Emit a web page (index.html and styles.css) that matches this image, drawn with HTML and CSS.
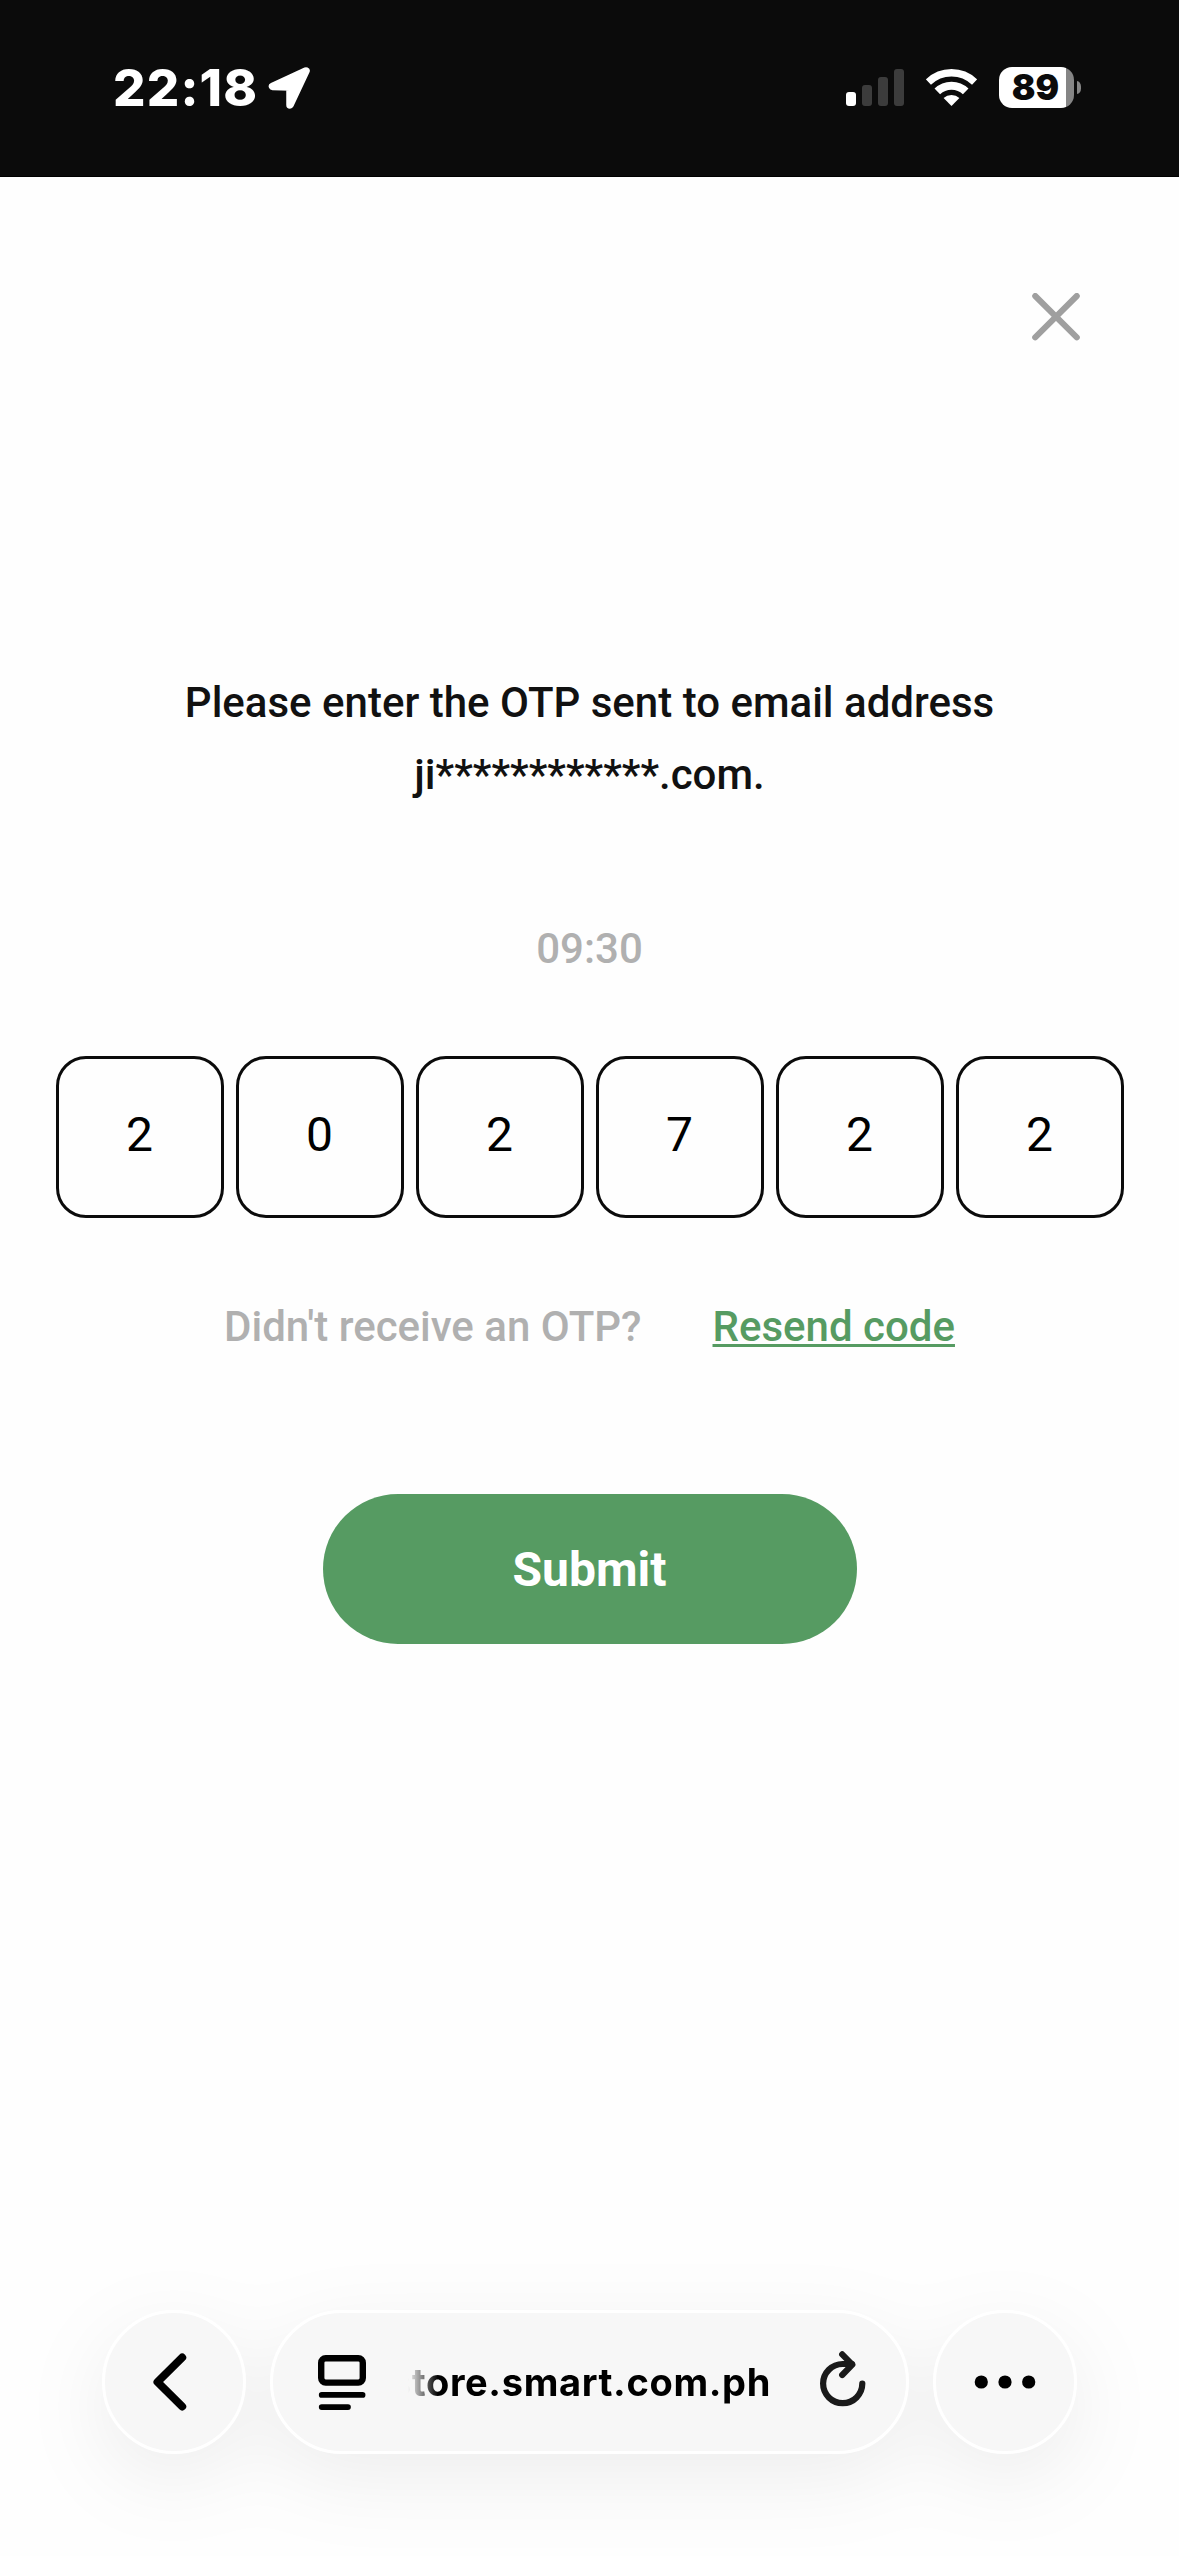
FILE: index.html
```html
<!DOCTYPE html>
<html lang="en">
<head>
    <meta charset="UTF-8">
    <meta name="viewport" content="width=device-width, initial-scale=1.0">
    <title>Enter OTP</title>
    <link rel="stylesheet" href="styles.css">
</head>
<body>
    <div class="status-bar">
        <div class="status-left">
            <span class="time">22:18</span>
            <svg class="location" width="43" height="43" viewBox="0 0 43 43">
                <path d="M38 4 L4.5 19.5 L22 20 L22 38 Z" fill="#fff" stroke="#fff" stroke-width="7.5" stroke-linejoin="round"/>
            </svg>
        </div>
        <div class="status-right">
            <svg width="58" height="37" viewBox="0 0 58 37">
                <rect x="0" y="23" width="10" height="14" rx="3" fill="#fff"/>
                <rect x="16" y="16" width="10" height="21" rx="3" fill="#3c3c3c"/>
                <rect x="32" y="8" width="10" height="29" rx="3" fill="#3c3c3c"/>
                <rect x="48" y="0" width="10" height="37" rx="3" fill="#3c3c3c"/>
            </svg>
            <svg class="wifi" width="51" height="37" viewBox="0 0 51 37">
                <path d="M2.4 13.1 A33.3 33.3 0 0 1 48.6 13.1" fill="none" stroke="#fff" stroke-width="7.4"/>
                <path d="M11.3 22.4 A20.4 20.4 0 0 1 39.7 22.4" fill="none" stroke="#fff" stroke-width="8"/>
                <path d="M25.5 37 L17.6 29 A11.6 11.6 0 0 1 33.4 29 Z" fill="#fff"/>
            </svg>
            <div class="battery"><span>89</span></div>
            <div class="battery-tip"></div>
        </div>
    </div>

    <div class="page">
        <div class="close-row">
            <svg class="close" width="48" height="48" viewBox="0 0 48 48">
                <path d="M3.2 3 L44.8 44.4 M44.8 3 L3.2 44.4" stroke="#9f9f9f" stroke-width="6" stroke-linecap="round"/>
            </svg>
        </div>

        <p class="message">Please enter the OTP sent to email address<br>ji************.com.</p>
        <p class="timer">09:30</p>

        <div class="otp">
            <div class="digit">2</div>
            <div class="digit">0</div>
            <div class="digit">2</div>
            <div class="digit">7</div>
            <div class="digit">2</div>
            <div class="digit">2</div>
        </div>

        <div class="resend">
            <span>Didn't receive an OTP?</span>
            <a href="#">Resend code</a>
        </div>

        <button class="submit">Submit</button>
    </div>

    <div class="toolbar">
        <div class="round back">
            <svg width="34" height="60" viewBox="0 0 34 60">
                <path d="M29.2 5.5 L4.5 30 L29.2 54.5" fill="none" stroke="#000" stroke-width="8" stroke-linecap="round" stroke-linejoin="round"/>
            </svg>
        </div>
        <div class="address">
            <svg width="48" height="55" viewBox="0 0 48 55">
                <rect x="3.2" y="3.2" width="41.6" height="24.4" rx="4.5" fill="none" stroke="#000" stroke-width="6.4"/>
                <path d="M3.7 39.9 H44.6 M3.7 52.1 H30" stroke="#000" stroke-width="5.7" stroke-linecap="round"/>
            </svg>
            <span class="url">store.smart.com.ph</span>
            <svg class="reload" width="46" height="56" viewBox="0 0 46 56">
                <path d="M42.3 32.6 A19.6 19.6 0 1 1 22.7 13 H32" fill="none" stroke="#1a1a1a" stroke-width="6.2" stroke-linecap="round"/>
                <path d="M22.2 3.4 L32.3 13.7 L22.2 24" fill="none" stroke="#1a1a1a" stroke-width="6.2" stroke-linecap="round" stroke-linejoin="round"/>
            </svg>
        </div>
        <div class="round">
            <svg width="62" height="14" viewBox="0 0 62 14">
                <circle cx="7.3" cy="7" r="6.6"/>
                <circle cx="31" cy="7" r="6.6"/>
                <circle cx="54.7" cy="7" r="6.6"/>
            </svg>
        </div>
    </div>
</body>
</html>
```
FILE: styles.css
```css
* { margin: 0; padding: 0; box-sizing: border-box; }
body { height: 2556px; display: flex; flex-direction: column; background: #fefefe; color: #111; font-family: Roboto, sans-serif; overflow: hidden; }
svg { display: block; flex: none; }

/* Status bar */
.status-bar { height: 177px; display: flex; justify-content: space-between; align-items: flex-start; padding: 67px 98px 0 113px; background: #0b0b0b; border-bottom: 1px solid #000; color: #fff; font-family: Inter, sans-serif; }
.status-left, .status-right { display: flex; align-items: center; height: 41px; }
.time { width: 155px; font-size: 51px; font-weight: 800; line-height: 42px; letter-spacing: 1.2px; white-space: nowrap; }
.location { margin-top: 2px; }
.wifi { margin-left: 22px; }
.battery { width: 75px; height: 41px; margin-left: 22px; padding-right: 1px; border-radius: 13px; background: linear-gradient(90deg, #fff 67px, #858585 67px); color: #0b0b0b; text-align: center; }
.battery span { display: block; width: 73px; font-size: 35px; font-weight: 900; line-height: 41px; }
.battery-tip { width: 4px; height: 13px; margin-left: 3px; border-radius: 0 5px 5px 0 / 0 7px 7px 0; background: #858585; }

/* OTP form */
.page { flex: 1; display: flex; flex-direction: column; align-items: center; }
.close-row { width: 100%; display: flex; justify-content: flex-end; padding: 116px 99.5px 0 0; }
.message { margin-top: 326px; font-size: 42px; font-weight: 500; line-height: 72px; text-align: center; white-space: nowrap; }
.timer { margin-top: 102px; font-size: 42px; font-weight: 500; line-height: 72px; color: #b0b0b0; }
.otp { display: flex; gap: 12px; margin-top: 71px; }
.digit { width: 168px; height: 162px; padding-top: 48px; border: 3px solid #0b0b0b; border-radius: 30px; color: #000; font-size: 48px; line-height: 56px; text-align: center; }
.resend { display: flex; gap: 71px; margin-top: 73px; font-size: 42px; font-weight: 500; line-height: 72px; color: #b0b0b0; }
.resend a { color: #569b62; text-decoration: underline; text-decoration-thickness: 3px; text-underline-offset: 3px; text-decoration-skip-ink: none; }
.submit { width: 534px; height: 150px; margin-top: 131px; border: none; border-radius: 75px; background: #569b62; color: #fff; font-family: inherit; font-size: 48px; font-weight: 700; }

/* Browser toolbar */
.toolbar { display: flex; justify-content: center; gap: 24px; padding-bottom: 102px; filter: drop-shadow(0 24px 40px rgba(0, 0, 0, 0.065)); }
.round { width: 144px; height: 144px; display: flex; align-items: center; justify-content: center; border: 3px solid #fff; border-radius: 50%; background: #f7f7f7; }
.back { padding-right: 9px; }
.address { width: 639px; height: 144px; display: flex; align-items: center; padding: 0 40px 0 45px; border: 3px solid #fff; border-radius: 72px; background: #f7f7f7; }
.url { flex: 1; height: 56px; margin: 0 49px 0 22px; display: flex; justify-content: flex-end; color: #000; font-family: Inter, sans-serif; font-size: 38px; font-weight: 700; line-height: 56px; letter-spacing: 0.65px; white-space: nowrap; -webkit-mask-image: linear-gradient(90deg, transparent 20px, #000 50px); mask-image: linear-gradient(90deg, transparent 20px, #000 50px); }
.reload { margin-bottom: 7px; }
```
